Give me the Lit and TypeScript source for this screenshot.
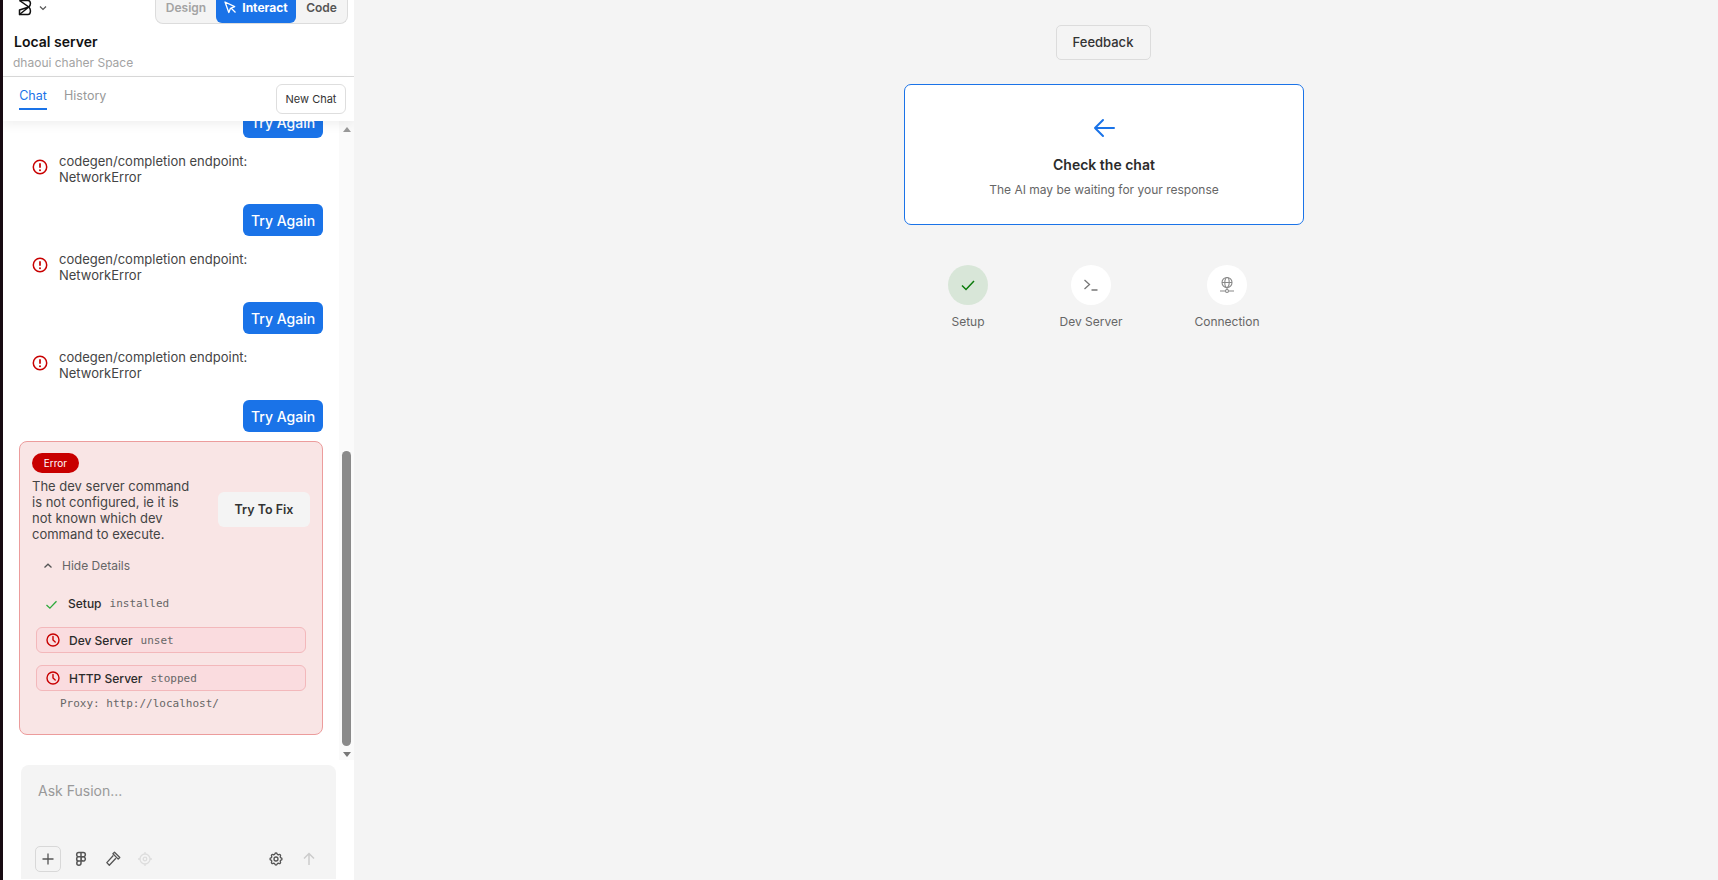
import { LitElement, html, css, svg } from "lit";
import { customElement } from "lit/decorators.js";

const alertIcon = svg`<svg class="alert" width="16" height="16" viewBox="0 0 16 16" fill="none" stroke="#c80000" stroke-width="1.5"><circle cx="8" cy="8" r="6.7"/><path d="M8 4.2v4.6" stroke-width="1.7"/><circle cx="8" cy="11.3" r="1" fill="#c80000" stroke="none"/></svg>`;
const clockIcon = svg`<svg width="14" height="14" viewBox="0 0 14 14" fill="none" stroke="#c80000" stroke-width="1.4" stroke-linecap="round"><circle cx="7" cy="7" r="6"/><path d="M7 3.5V7l2.2 2"/></svg>`;

@customElement("app-root")
export class AppRoot extends LitElement {
  static styles = css`
    :host { display: flex; width: 1718px; height: 880px; overflow: hidden; font-family: Inter, "Noto Sans", sans-serif; background: #f4f4f4; color: #2b2b2b; }
    button { font-family: inherit; cursor: pointer; }
    .strip { width: 3px; flex: none; background: #170a12; }
    .side { width: 351px; flex: none; display: flex; flex-direction: column; background: #fff; height: 880px; overflow: hidden; }
    .head { height: 76px; flex: none; position: relative; z-index: 2; display: flex; flex-direction: column; border-bottom: 1px solid #d9d9d9; box-sizing: content-box; }
    .top { display: flex; justify-content: space-between; align-items: flex-start; height: 24px; padding: 0 6px 0 14px; }
    .logo { display: flex; align-items: center; gap: 6px; margin-top: -1px; }
    .seg { display: flex; height: 24px; width: 193px; box-sizing: border-box; background: #f4f4f4; border: 1px solid #dcdcdc; border-top: 0; border-radius: 0 0 8px 8px; font-size: 12px; font-weight: 600; line-height: 15px; }
    .seg span { display: flex; align-items: center; justify-content: center; padding-bottom: 8px; box-sizing: content-box; height: 15px; }
    .design { width: 60px; color: #a3a3a3; }
    .interact { width: 80px; background: #1a73e8; color: #fff; border-radius: 0 0 6px 6px; gap: 5px; font-weight: 700; }
    .codeb { width: 51px; color: #555; }
    .title { font-size: 14px; font-weight: 600; color: #111; margin: 9px 0 0 11px; line-height: 17px; }
    .sub { font-size: 12px; color: #a3a3a3; margin: 5px 0 0 10px; line-height: 15px; }
    .tabs { height: 44px; flex: none; display: flex; position: relative; z-index: 2; background: #fff; box-shadow: 0 4px 10px rgba(0,0,0,.06); padding: 0 8px 0 16px; justify-content: space-between; }
    .tablist { display: flex; gap: 17px; font-size: 12.5px; }
    .tab { height: 33px; line-height: 19px; padding-top: 9px; box-sizing: border-box; color: #999; }
    .tab.on { color: #1a73e8; border-bottom: 2px solid #1a73e8; width: 28px; text-align: center; }
    .newchat { height: 30px; width: 70px; margin-top: 7px; background: #fff; border: 1px solid #dedede; border-radius: 6px; font-size: 11px; font-weight: 400; color: #333; padding: 0; }
    .body { display: flex; height: 639px; flex: none; }
    .scroll { flex: 1; overflow: hidden; min-width: 0; display: flex; flex-direction: column; padding: 0 16px; }
    .msgs { margin-top: -15px; display: flex; flex-direction: column; }
    .try { align-self: flex-end; width: 80px; height: 32px; background: #1a73e8; border: 0; border-radius: 6px; color: #fff; font-size: 14px; font-weight: 500; padding: 0; flex: none; }
    .err { display: flex; gap: 11px; margin: 15px 0 19px 13px; height: 32px; font-size: 13px; line-height: 16px; color: #444; align-items: center; }
    .alert { flex: none; margin-bottom: 5px; }
    .card { margin-top: 9px; width: 304px; height: 294px; flex: none; box-sizing: border-box; background: #f9e5e5; border: 1px solid #ec9c9c; border-radius: 8px; padding: 11px 12px 0 12px; display: flex; flex-direction: column; }
    .badge { align-self: flex-start; width: 47px; height: 20px; border-radius: 10px; background: #c80000; color: #fff; font-size: 10px; line-height: 20px; text-align: center; }
    .msgrow { display: flex; justify-content: space-between; align-items: center; margin-top: 5px; }
    .msgtext { width: 165px; font-size: 13px; line-height: 16px; color: #444; }
    .fix { width: 92px; height: 35px; border: 0; background: #f4f4f4; border-radius: 6px; font-size: 12.5px; font-weight: 600; color: #333; padding: 0; margin-top: -2px; }
    .hide { display: flex; align-items: center; gap: 9px; margin: 16px 0 0 11px; font-size: 12px; line-height: 16px; color: #666; }
    .setup { display: flex; align-items: center; margin: 22px 0 0 13px; font-size: 12px; font-weight: 500; line-height: 16px; }
    .setup svg { margin-right: 10px; }
    .mono { font-family: "DejaVu Sans Mono", "Liberation Mono", monospace; font-size: 11px; font-weight: 400; color: #666; }
    .setup .mono, .row .mono { margin-left: 8px; }
    .row { display: flex; align-items: center; height: 26px; box-sizing: border-box; margin: 15px 0 0 4px; width: 270px; background: #fadcdf; border: 1px solid #f3b8bb; border-radius: 6px; padding-left: 9px; font-size: 12px; font-weight: 500; }
    .row svg { margin-right: 9px; }
    .row + .row { margin-top: 12px; }
    .proxy { margin: 6px 0 0 28px; line-height: 13px; }
    .sbar { width: 15px; flex: none; background: #fafafa; display: flex; flex-direction: column; align-items: center; }
    .up { width: 0; height: 0; border: 4.5px solid transparent; border-top: 0; border-bottom: 5px solid #999; margin-top: 6px; }
    .dn { width: 0; height: 0; border: 4.5px solid transparent; border-bottom: 0; border-top: 5px solid #777; margin-top: 6px; }
    .thumb { width: 9px; height: 295px; margin-top: 319px; background: #8a8a8a; border-radius: 5px; }
    .inputwrap { flex: 1; padding: 6px 18px 0; margin-top: -1px; }
    .input { background: #f4f4f4; border-radius: 8px 8px 0 0; height: 114px; width: 315px; box-sizing: border-box; padding: 17px 19px 0 14px; display: flex; flex-direction: column; }
    .ph { font-size: 14px; line-height: 17px; color: #999; padding-left: 3px; }
    .tools { display: flex; align-items: center; margin-top: 47px; }
    .plus { width: 26px; height: 26px; box-sizing: border-box; border: 1px solid #d8d8d8; border-radius: 5px; display: flex; align-items: center; justify-content: center; }
    .tool { width: 16px; height: 16px; margin-left: 16px; display: flex; }
    .tool.first { margin-left: 12px; }
    .tool.last { margin-left: 17px; }
    .spacer { flex: 1; }
    .main { flex: 1; display: flex; flex-direction: column; align-items: center; padding-left: 136px; padding-top: 25px; }
    .feedback { width: 95px; height: 35px; margin-right: 2px; background: #f4f4f4; border: 1px solid #dcdcdc; border-radius: 5px; font-size: 13px; font-weight: 500; color: #333; padding: 0 0 2px; }
    .cta { width: 400px; height: 141px; box-sizing: border-box; margin-top: 24px; background: #fff; border: 1px solid #1a73e8; border-radius: 7px; display: flex; flex-direction: column; align-items: center; padding-top: 31px; }
    .cta h2 { font-size: 14px; font-weight: 600; line-height: 17px; margin: 16px 0 0; color: #2b2b2b; }
    .cta p { font-size: 12px; line-height: 15px; margin: 9px 0 0; color: #666; }
    .steps { display: flex; margin: 40px 13px 0 0; width: 329px; }
    .step { display: flex; flex-direction: column; align-items: center; width: 70px; font-size: 12px; color: #666; line-height: 15px; }
    .step.b { margin-left: 53px; }
    .step.c { margin-left: 66px; }
    .circ { width: 40px; height: 40px; border-radius: 50%; background: #fff; display: flex; align-items: center; justify-content: center; margin-bottom: 9px; }
    .circ.done { background: #d8e6d8; }
  `;

  private tryRow() {
    return html`<div class="err">${alertIcon}<span>codegen/completion endpoint:<br />NetworkError</span></div><button class="try">Try Again</button>`;
  }

  render() {
    return html`
      <div class="strip"></div>
      <aside class="side">
        <header class="head">
          <div class="top">
            <div class="logo">
              <svg width="16" height="17" viewBox="0 0 16 17" fill="none" stroke="#111" stroke-width="1.5" stroke-linejoin="round"><path d="M2.500 1.500H11c2.800 0 3.300 4.200.8 6.500 2.500 2.300 2 7.500-.8 7.500H2.500"/><path d="M2.500 1.500L11.800 8 2.500 15.500V11l9.300-3"/></svg>
              <svg width="8" height="8" viewBox="0 0 8 8" fill="none" stroke="#555" stroke-width="1.2"><path d="M1 2.500l3 3 3-3"/></svg>
            </div>
            <div class="seg">
              <span class="design">Design</span>
              <span class="interact"><svg width="13" height="13" viewBox="0 0 13 13" fill="none" stroke="#fff" stroke-width="1.300" stroke-linejoin="round"><path d="M1 1l3.800 10.500 1.700-4.200 4.200-1.700z"/><path d="M7 7l4.500 4.500"/></svg>Interact</span>
              <span class="codeb">Code</span>
            </div>
          </div>
          <div class="title">Local server</div>
          <div class="sub">dhaoui chaher Space</div>
        </header>
        <nav class="tabs">
          <div class="tablist"><div class="tab on">Chat</div><div class="tab">History</div></div>
          <button class="newchat">New Chat</button>
        </nav>
        <section class="body">
          <div class="scroll">
            <div class="msgs">
              <button class="try">Try Again</button>
              ${this.tryRow()}${this.tryRow()}${this.tryRow()}
              <div class="card">
                <span class="badge">Error</span>
                <div class="msgrow">
                  <div class="msgtext">The dev server command is not configured, ie it is not known which dev command to execute.</div>
                  <button class="fix">Try To Fix</button>
                </div>
                <div class="hide"><svg width="10" height="10" viewBox="0 0 10 10" fill="none" stroke="#555" stroke-width="1.300"><path d="M1.500 6.500L5 3.200l3.500 3.300"/></svg>Hide Details</div>
                <div class="setup"><svg width="13" height="13" viewBox="0 0 13 13" fill="none" stroke="#2eaa3c" stroke-width="1.300"><path d="M1.500 7l3.400 3.200 6.600-7"/></svg>Setup<span class="mono">installed</span></div>
                <div class="row">${clockIcon}Dev Server<span class="mono">unset</span></div>
                <div class="row">${clockIcon}HTTP Server<span class="mono">stopped</span></div>
                <div class="mono proxy">Proxy: http://localhost/</div>
              </div>
            </div>
          </div>
          <div class="sbar"><div class="up"></div><div class="thumb"></div><div class="dn"></div></div>
        </section>
        <div class="inputwrap">
          <div class="input">
            <div class="ph">Ask Fusion...</div>
            <div class="tools">
              <div class="plus"><svg width="12" height="12" viewBox="0 0 12 12" stroke="#555" stroke-width="1.300"><path d="M6 .5v11M.5 6h11"/></svg></div>
              <div class="tool first"><svg width="16" height="16" viewBox="0 0 16 16" fill="none" stroke="#555" stroke-width="1.500" stroke-linejoin="round"><path d="M8 1.500H5.800a2.100 2.100 0 0 0 0 4.300H8zM8 1.500h2.200a2.100 2.100 0 0 1 0 4.300H8zM8 5.800H5.800a2.100 2.100 0 0 0 0 4.300H8zM10.200 5.800a2.100 2.100 0 1 1 0 4.300 2.100 2.100 0 0 1 0-4.300zM8 10.100H5.800A2.100 2.100 0 1 0 8 12.300z"/></svg></div>
              <div class="tool"><svg width="16" height="16" viewBox="0 0 16 16" fill="none" stroke="#555" stroke-width="1.300" stroke-linejoin="round"><path d="M9.500 1.200l5.300 5.300-1.600 1.600-5.300-5.300zM8.300 4.500L1.800 11.600l2.500 2.600 6.600-7"/></svg></div>
              <div class="tool"><svg width="16" height="16" viewBox="0 0 16 16" fill="none" stroke="#ddd" stroke-width="1.300"><circle cx="8" cy="8" r="5"/><circle cx="8" cy="8" r="1.800"/><path d="M8 1v2M8 13v2M1 8h2M13 8h2"/></svg></div>
              <div class="spacer"></div>
              <div class="tool"><svg width="16" height="16" viewBox="0 0 24 24" fill="none" stroke="#555" stroke-width="2" stroke-linejoin="round"><path d="M10.325 4.317c.426-1.756 2.924-1.756 3.350 0a1.724 1.724 0 0 0 2.573 1.066c1.543-.94 3.310.826 2.370 2.370a1.724 1.724 0 0 0 1.065 2.572c1.756.426 1.756 2.924 0 3.350a1.724 1.724 0 0 0-1.066 2.573c.94 1.543-.826 3.310-2.370 2.370a1.724 1.724 0 0 0-2.572 1.065c-.426 1.756-2.924 1.756-3.350 0a1.724 1.724 0 0 0-2.573-1.066c-1.543.94-3.310-.826-2.370-2.370a1.724 1.724 0 0 0-1.065-2.572c-1.756-.426-1.756-2.924 0-3.350a1.724 1.724 0 0 0 1.066-2.573c-.94-1.543.826-3.310 2.370-2.370c1 .608 2.296.07 2.572-1.065z"/><circle cx="12" cy="12" r="3"/></svg></div>
              <div class="tool last"><svg width="16" height="16" viewBox="0 0 16 16" fill="none" stroke="#ccc" stroke-width="1.500"><path d="M8 14V2.500M3 7.500l5-5 5 5"/></svg></div>
            </div>
          </div>
        </div>
      </aside>
      <main class="main">
        <button class="feedback">Feedback</button>
        <div class="cta">
          <svg width="24" height="24" viewBox="0 0 24 24" fill="none" stroke="#1a73e8" stroke-width="2" stroke-linecap="round" stroke-linejoin="round"><path d="M22 12H3M11 4l-8 8 8 8"/></svg>
          <h2>Check the chat</h2>
          <p>The AI may be waiting for your response</p>
        </div>
        <div class="steps">
          <div class="step"><div class="circ done"><svg width="16" height="16" viewBox="0 0 16 16" fill="none" stroke="#0a7a0a" stroke-width="1.500"><path d="M2 8.500l4 4 8-8.500"/></svg></div>Setup</div>
          <div class="step b"><div class="circ"><svg width="16" height="16" viewBox="0 0 16 16" fill="none" stroke="#777" stroke-width="1.300"><path d="M1.500 3l5 4.500-5 4.500M8.500 13h6"/></svg></div>Dev Server</div>
          <div class="step c"><div class="circ"><svg width="18" height="18" viewBox="0 0 18 18" fill="none" stroke="#888" stroke-width="1.100"><circle cx="9" cy="6.500" r="5"/><ellipse cx="9" cy="6.500" rx="2.200" ry="5"/><path d="M4 6.500h10M9 11.500v2.500M2 15h5M11 15h5"/><circle cx="9" cy="15" r="1.500"/></svg></div>Connection</div>
        </div>
      </main>
    `;
  }
}
